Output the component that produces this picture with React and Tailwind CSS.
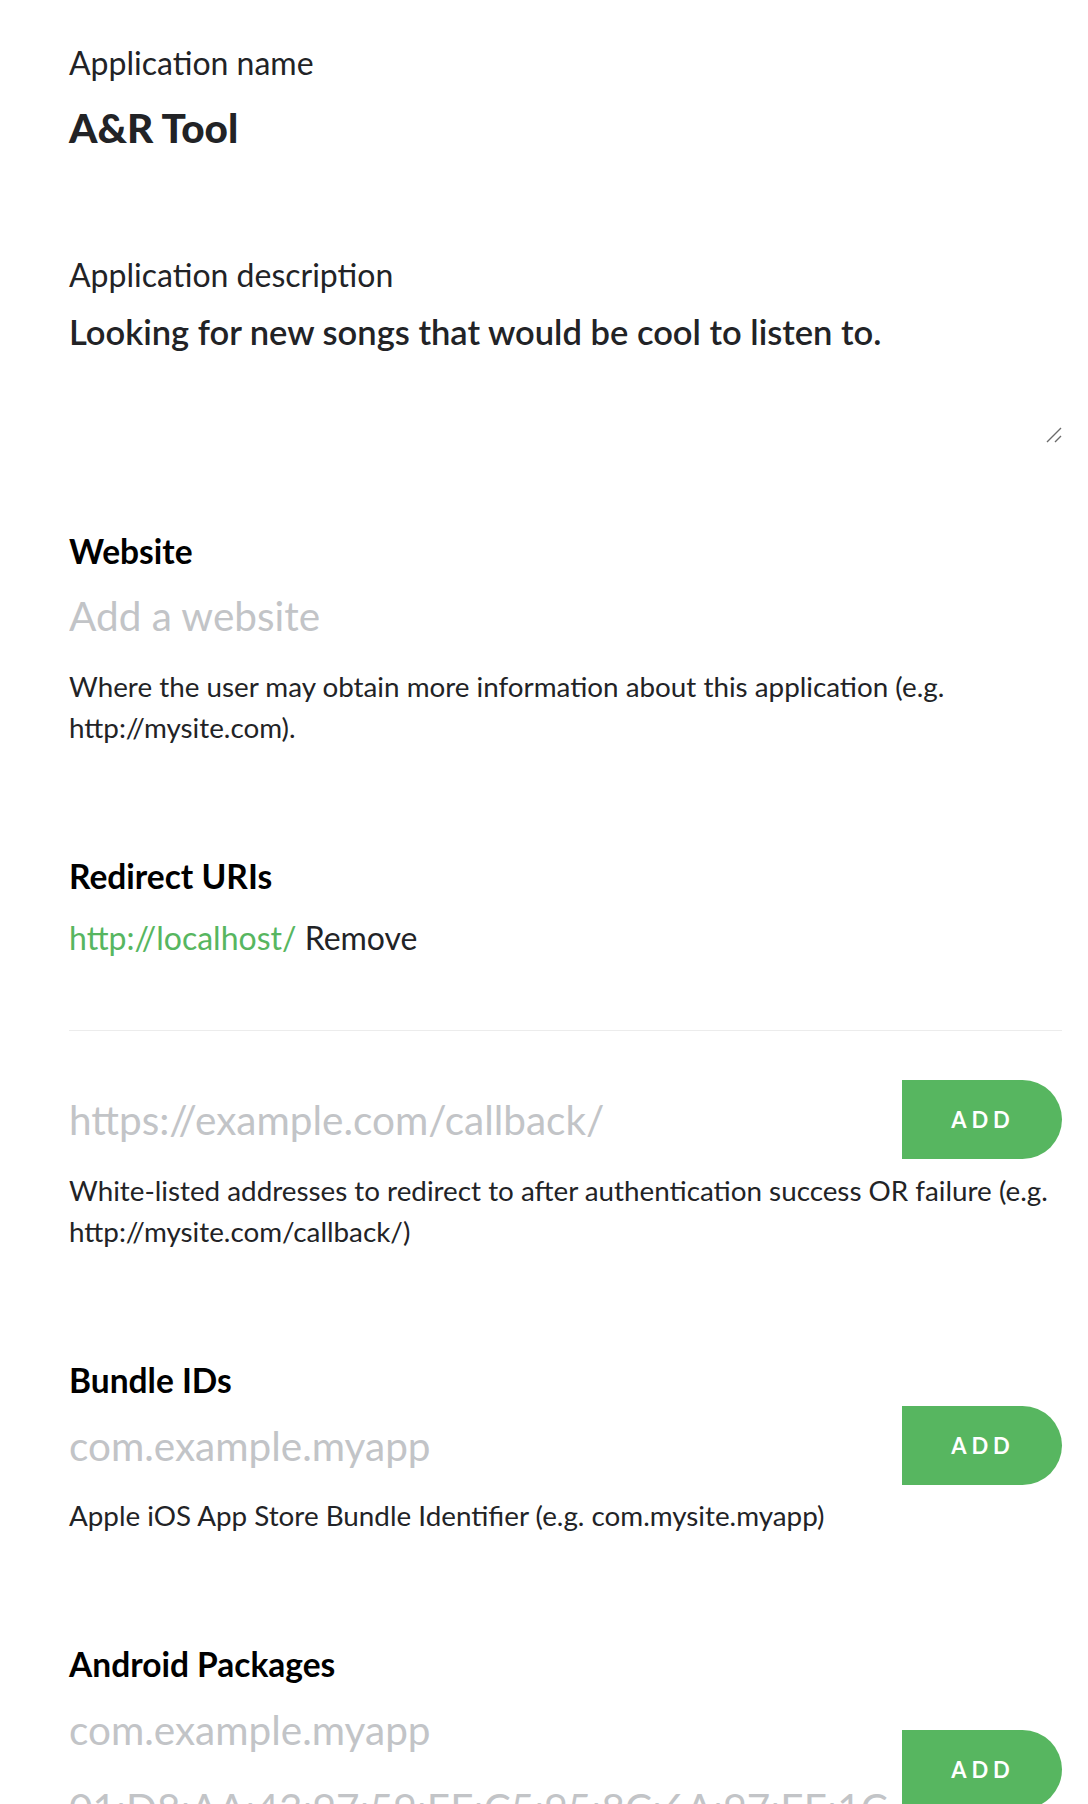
import React from 'react';

function AddButton() {
  return (
    <button className="w-[160px] h-[79px] shrink-0 bg-[#57b660] rounded-r-[40px] text-white text-[22px] font-bold tracking-[0.22em] pl-[2px]">
      ADD
    </button>
  );
}

function Field({ placeholder, className = '' }) {
  return (
    <input
      type="text"
      placeholder={placeholder}
      className={`w-full bg-transparent outline-none text-[40.5px] leading-[48px] text-[#222326] placeholder:text-[#c2c4c7] ${className}`}
    />
  );
}

function Heading({ children, className = '' }) {
  return <h2 className={`text-[33.5px] leading-[40px] font-bold text-black ${className}`}>{children}</h2>;
}

function Help({ children, className = '' }) {
  return <p className={`text-[27.8px] leading-[41px] text-[#222326] ${className}`}>{children}</p>;
}

export default function App() {
  return (
    <div className="bg-white font-[family-name:Lato,_sans-serif] pl-[69px] pr-[26px] pt-[43px] overflow-hidden h-[1804px]">
      <label className="block text-[32px] leading-[40px] text-[#222326]">Application name</label>
      <div className="mt-[21px] text-[40.5px] leading-[48px] font-black text-[#222326]">A&amp;R Tool</div>

      <label className="block mt-[103px] text-[32px] leading-[40px] text-[#222326]">Application description</label>
      <div className="relative mt-[17px]">
        <textarea
          className="block w-full h-[133px] resize-none bg-transparent outline-none text-[34.5px] leading-[40px] font-semibold text-[#222326]"
          defaultValue="Looking for new songs that would be cool to listen to."
        />
        <svg className="absolute right-0 bottom-[2px]" width="16" height="16" viewBox="0 0 16 16">
          <path d="M1 15 L15 1 M9 15 L15 9" stroke="#6b6b6b" strokeWidth="1.4" />
        </svg>
      </div>

      <Heading className="mt-[86px]">Website</Heading>
      <Field placeholder="Add a website" className="mt-[21px]" />
      <Help className="mt-[26px]">
        Where the user may obtain more information about this application (e.g. http://mysite.com).
      </Help>

      <Heading className="mt-[108px]">Redirect URIs</Heading>
      <div className="mt-[22px] text-[32px] leading-[40px]">
        <span className="text-[#57b660]">http://localhost/</span>{' '}
        <span className="text-[#222326]">Remove</span>
      </div>
      <div className="mt-[72px] h-px bg-[#ececec]" />

      <div className="mt-[49px] flex items-center">
        <Field placeholder="https://example.com/callback/" />
        <AddButton />
      </div>
      <Help className="mt-[11px]">
        White-listed addresses to redirect to after authentication success OR failure (e.g. http://mysite.com/callback/)
      </Help>

      <Heading className="mt-[108px]">Bundle IDs</Heading>
      <div className="mt-[6px] flex items-center">
        <Field placeholder="com.example.myapp" />
        <AddButton />
      </div>
      <Help className="mt-[10px]">Apple iOS App Store Bundle Identifier (e.g. com.mysite.myapp)</Help>

      <Heading className="mt-[108px]">Android Packages</Heading>
      <div className="mt-[22px] flex items-center">
        <div className="flex-1 flex flex-col gap-[30px]">
          <Field placeholder="com.example.myapp" />
          <Field placeholder="01:D8:AA:43:97:59:EE:C5:95:8C:6A:97:EE:1C" />
        </div>
        <AddButton />
      </div>
    </div>
  );
}
